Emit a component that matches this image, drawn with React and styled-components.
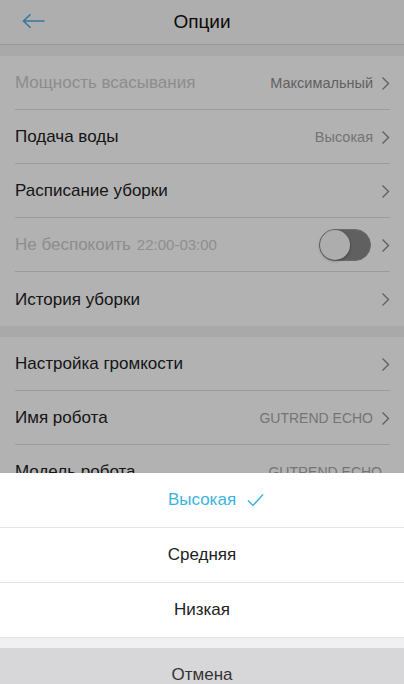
import React from 'react';
import styled, { createGlobalStyle } from 'styled-components';

const GlobalStyle = createGlobalStyle`
  html, body {
    margin: 0;
    padding: 0;
    background: #ffffff;
    font-family: 'Liberation Sans', Arial, sans-serif;
    overflow: hidden;
  }
`;

const Screen = styled.div`
  width: 404px;
  height: 684px;
  overflow: hidden;
  background: #f2f2f2;
`;

const Header = styled.div`
  height: 44px;
  display: flex;
  align-items: center;
  justify-content: center;
  background: #fafafa;
  border-bottom: 1px solid #d8d8d8;
  position: relative;
`;

const BackButton = styled.div`
  position: absolute;
  left: 22px;
  top: 11px;
  width: 24px;
  height: 20px;
  display: flex;
  align-items: center;
`;

const Title = styled.div`
  font-size: 19px;
  color: #111;
`;

const Section = styled.div`
  margin-top: 11px;
  background: #ffffff;
  padding: 0 14px 0 15px;
`;

const Row = styled.div`
  height: 54px;
  box-sizing: border-box;
  display: flex;
  align-items: center;
  padding-top: 1px;
  border-bottom: ${({ last }) => (last ? 'none' : '1px solid #dedede')};
`;

const Label = styled.div`
  flex: 1;
  font-size: 17px;
  color: ${({ disabled }) => (disabled ? '#cacaca' : '#222')};
  display: flex;
  align-items: baseline;
  gap: 6px;
`;

const Time = styled.span`
  font-size: 15px;
  color: #cdcdcd;
`;

const Value = styled.div`
  font-size: ${({ latin }) => (latin ? '14px' : '14.5px')};
  color: ${({ light }) => (light ? '#a8a8a8' : '#8c8c8c')};
  margin-right: 8px;
`;

const Toggle = styled.div`
  width: 52px;
  height: 32px;
  box-sizing: border-box;
  border-radius: 16px;
  background: #8a8a8a;
  border: 1px solid #9a9a9a;
  margin-right: 10px;
  position: relative;
`;

const Knob = styled.div`
  position: absolute;
  left: 0;
  top: 0;
  width: 30px;
  height: 30px;
  border-radius: 50%;
  background: #f8f8f8;
  box-shadow: 0 1px 3px rgba(0, 0, 0, 0.35);
`;

const Overlay = styled.div`
  position: fixed;
  inset: 0;
  background: rgba(0, 0, 0, 0.3);
`;

const Sheet = styled.div`
  position: fixed;
  left: 0;
  right: 0;
  top: 473px;
  background: #f0f0f0;
`;

const Option = styled.div`
  height: 55px;
  box-sizing: border-box;
  display: flex;
  align-items: center;
  justify-content: center;
  background: #ffffff;
  border-bottom: 1px solid #e4e4e4;
  font-size: 17px;
  color: ${({ active }) => (active ? '#3bb4dd' : '#222')};
`;

const OptionText = styled.span`
  position: relative;
`;

const CheckMark = styled.span`
  position: absolute;
  left: calc(100% + 11px);
  top: 50%;
  margin-top: -7px;
  height: 14px;
  display: flex;
`;

const Cancel = styled.div`
  margin-top: 10px;
  height: 54px;
  display: flex;
  align-items: center;
  justify-content: center;
  background: #d7d7d9;
  font-size: 17px;
  color: #333;
`;

const Chevron = () => (
  <svg width="9" height="15" viewBox="0 0 9 15">
    <polyline points="1.5,1.5 7.5,7.5 1.5,13.5" fill="none" stroke="#8a8a8a" strokeWidth="1.4" />
  </svg>
);

const BackArrow = () => (
  <svg width="24" height="16" viewBox="0 0 24 16">
    <path d="M1.5 8 H22.5 M8.5 1.2 L1.5 8 L8.5 14.8" fill="none" stroke="#4aa9e8" strokeWidth="1.6" />
  </svg>
);

const Check = () => (
  <svg width="17" height="14" viewBox="0 0 17 14">
    <polyline points="1,7.5 6,12.5 16,1.5" fill="none" stroke="#3bb4dd" strokeWidth="1.5" />
  </svg>
);

const App = () => (
  <Screen>
    <GlobalStyle />
    <Header>
      <BackButton>
        <BackArrow />
      </BackButton>
      <Title>Опции</Title>
    </Header>

    <Section>
      <Row>
        <Label disabled>Мощность всасывания</Label>
        <Value>Максимальный</Value>
        <Chevron />
      </Row>
      <Row>
        <Label>Подача воды</Label>
        <Value light>Высокая</Value>
        <Chevron />
      </Row>
      <Row>
        <Label>Расписание уборки</Label>
        <Chevron />
      </Row>
      <Row>
        <Label disabled>
          Не беспокоить <Time>22:00-03:00</Time>
        </Label>
        <Toggle>
          <Knob />
        </Toggle>
        <Chevron />
      </Row>
      <Row last>
        <Label>История уборки</Label>
        <Chevron />
      </Row>
    </Section>

    <Section>
      <Row>
        <Label>Настройка громкости</Label>
        <Chevron />
      </Row>
      <Row>
        <Label>Имя робота</Label>
        <Value light latin>GUTREND ECHO</Value>
        <Chevron />
      </Row>
      <Row>
        <Label>Модель робота</Label>
        <Value light latin>GUTREND ECHO</Value>
      </Row>
    </Section>

    <Overlay />
    <Sheet>
      <Option active>
        <OptionText>
          Высокая
          <CheckMark>
            <Check />
          </CheckMark>
        </OptionText>
      </Option>
      <Option>Средняя</Option>
      <Option>Низкая</Option>
      <Cancel>Отмена</Cancel>
    </Sheet>
  </Screen>
);

export default App;
